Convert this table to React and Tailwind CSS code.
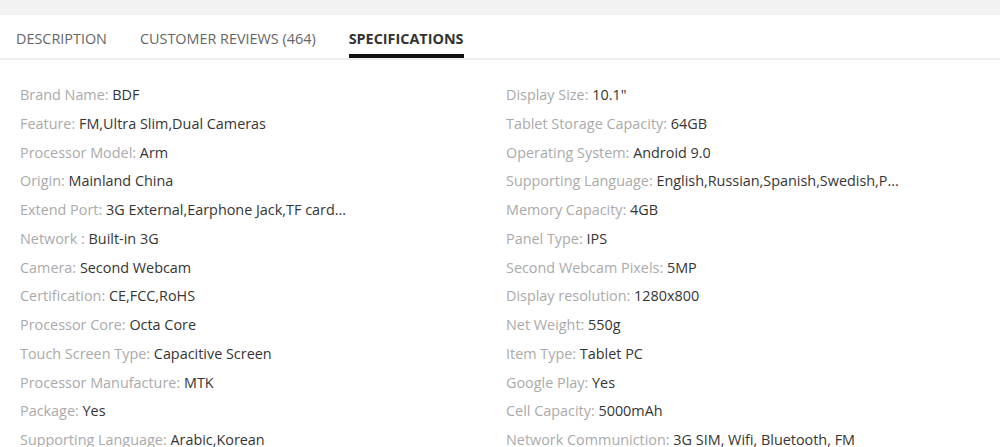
const left = [
  ["Brand Name", "BDF"],
  ["Feature", "FM,Ultra Slim,Dual Cameras"],
  ["Processor Model", "Arm"],
  ["Origin", "Mainland China"],
  ["Extend Port", "3G External,Earphone Jack,TF card..."],
  ["Network ", "Built-in 3G"],
  ["Camera", "Second Webcam"],
  ["Certification", "CE,FCC,RoHS"],
  ["Processor Core", "Octa Core"],
  ["Touch Screen Type", "Capacitive Screen"],
  ["Processor Manufacture", "MTK"],
  ["Package", "Yes"],
  ["Supporting Language", "Arabic,Korean"],
];

const right = [
  ["Display Size", "10.1\""],
  ["Tablet Storage Capacity", "64GB"],
  ["Operating System", "Android 9.0"],
  ["Supporting Language", "English,Russian,Spanish,Swedish,P..."],
  ["Memory Capacity", "4GB"],
  ["Panel Type", "IPS"],
  ["Second Webcam Pixels", "5MP"],
  ["Display resolution", "1280x800"],
  ["Net Weight", "550g"],
  ["Item Type", "Tablet PC"],
  ["Google Play", "Yes"],
  ["Cell Capacity", "5000mAh"],
  ["Network Communiction", "3G SIM, Wifi, Bluetooth, FM"],
];

function SpecList({ items }) {
  return (
    <ul className="flex flex-col">
      {items.map(([k, v], i) => (
        <li key={i} className="h-[28.75px] leading-[28.75px] whitespace-nowrap">
          <span className="text-[#aaaaaa]">{k}: </span>
          <span className="text-[#353535]">{v}</span>
        </li>
      ))}
    </ul>
  );
}

export default function App() {
  const tabs = ["DESCRIPTION", "CUSTOMER REVIEWS (464)", "SPECIFICATIONS"];
  return (
    <div className="w-[1000px] h-[447px] overflow-hidden bg-[#f2f2f2] pt-[15px] font-['Open_Sans',sans-serif]">
      <div className="bg-white h-full">
        <div className="flex gap-[33px] px-4 h-[45px] border-b-2 border-[#efefef] text-[14.4px]">
          {tabs.map((t, i) => (
            <div
              key={t}
              className={
                i === 2
                  ? "flex items-center h-full border-b-[4px] border-[#111] pt-[8px] font-bold text-[#333] -mb-[2px]"
                  : "flex items-center h-full pt-[5px] text-[#666]"
              }
            >
              {t}
            </div>
          ))}
        </div>
        <div className="grid grid-cols-[486px_1fr] pl-5 pt-[21px] text-[14.4px]">
          <SpecList items={left} />
          <SpecList items={right} />
        </div>
      </div>
    </div>
  );
}
